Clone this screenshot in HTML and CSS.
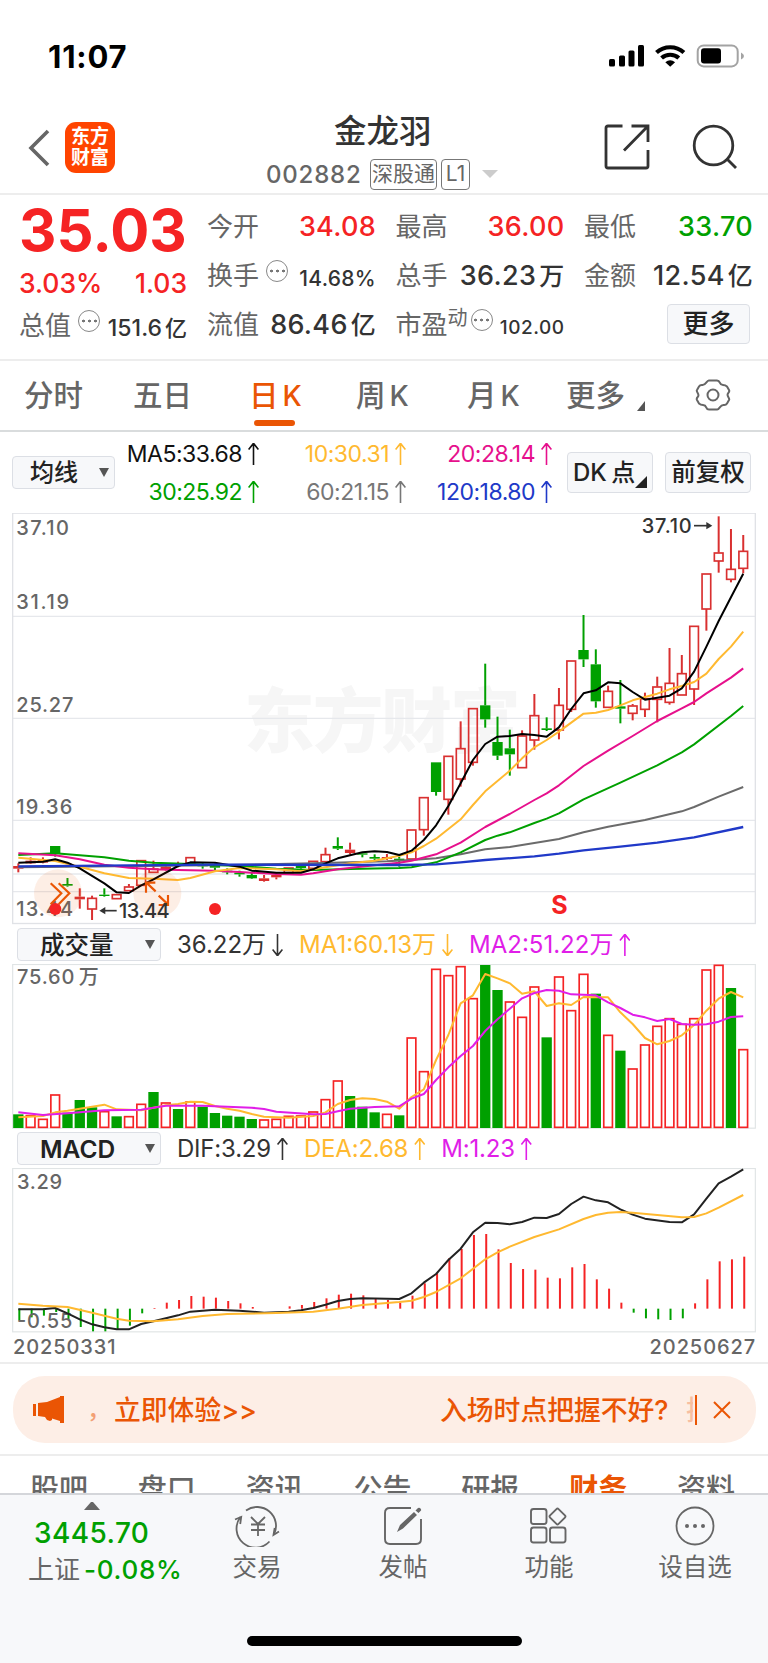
FILE: index.html
```
<!DOCTYPE html>
<html lang="zh-CN">
<head>
    <meta charset="UTF-8">
    <title>金龙羽 002882</title>
    <link rel="stylesheet" href="styles.css">
</head>
<body>
    <div class="status-bar">
        <span class="clock">11:07</span>
        <svg class="status-icons" width="140" height="24" viewBox="0 0 140 24">
            <rect x="1" y="15" width="6" height="7.500" rx="1.500"/>
            <rect x="11" y="11.500" width="6" height="11" rx="1.500"/>
            <rect x="20.500" y="6.500" width="6" height="16" rx="1.500"/>
            <rect x="30" y="1" width="6" height="21.500" rx="1.500"/>
            <g fill="none" stroke="#000" stroke-width="4.200">
                <path d="M48.500 8.500a20.500 20.500 0 0 1 27.400 0"/>
                <path d="M53.600 14a13 13 0 0 1 17.200 0"/>
            </g>
            <path d="M57.300 18.200q4.900-3.700 9.800 0l-4.900 4.600z"/>
            <rect x="89.700" y="1.400" width="40" height="21" rx="6" fill="none" stroke="#a3a3a3" stroke-width="2"/>
            <rect x="93" y="4.300" width="20" height="15.200" rx="3"/>
            <path d="M133 8.500q3 1.500 3 3.500t-3 3.500z" fill="#a3a3a3"/>
        </svg>
    </div>

    <header class="header">
        <svg class="back" width="24" height="40" viewBox="0 0 24 40"><path d="M21 3 4 20l17 17" fill="none" stroke="#666" stroke-width="3.600"/></svg>
        <div class="logo">东方<br>财富</div>
        <div class="title">
            <h1>金龙羽</h1>
            <div class="code-row">
                <span class="code">002882</span>
                <span class="tag">深股通</span>
                <span class="tag tag-l1">L1</span>
                <i class="caret"></i>
            </div>
        </div>
        <svg class="share" width="46" height="46" viewBox="0 0 46 46" fill="none" stroke="#333" stroke-width="2.800">
            <path d="M18.500 2H4Q2 2 2 4v38q0 2 2 2h38q2 0 2-2V26M27.500 2H44v16M44 2 20 26.500"/>
        </svg>
        <svg class="search" width="46" height="46" viewBox="0 0 46 46" fill="none" stroke="#333" stroke-width="2.800">
            <circle cx="21.500" cy="21.500" r="19.300"/><path d="m34.500 34.500 9.500 9.500"/>
        </svg>
    </header>

    <section class="quote">
        <div class="quote-main">
            <div class="price">35.03</div>
            <div class="pair change"><span>3.03%</span><span>1.03</span></div>
            <div class="pair cell"><label>总值</label><i class="more-dot"></i><b class="mid">151.6<em>亿</em></b></div>
        </div>
        <div class="quote-grid">
            <div class="cell"><label>今开</label><b class="up">34.08</b></div>
            <div class="cell"><label>最高</label><b class="up">36.00</b></div>
            <div class="cell"><label>最低</label><b class="down">33.70</b></div>
            <div class="cell"><label>换手</label><i class="more-dot"></i><b class="small">14.68%</b></div>
            <div class="cell"><label>总手</label><b>36.23<em>万</em></b></div>
            <div class="cell"><label>金额</label><b>12.54<em>亿</em></b></div>
            <div class="cell"><label>流值</label><b>86.46<em>亿</em></b></div>
            <div class="cell"><label>市盈<sup>动</sup></label><i class="more-dot tight"></i><b class="small tiny">102.00</b></div>
            <div class="cell"><button class="btn more-btn">更多</button></div>
        </div>
    </section>

    <nav class="period">
        <a class="p1">分时</a>
        <a class="p2">五日</a>
        <a class="p3 active">日<span>K</span></a>
        <a class="p4">周<span>K</span></a>
        <a class="p5">月<span>K</span></a>
        <a class="p6">更多<i class="corner"></i></a>
        <svg class="gear" width="36" height="34" viewBox="0 0 36 34" fill="none" stroke="#666" stroke-width="2">
            <path d="M14 2.500h8q2 0 2.800 2.200T28 7t4 1.500l2 3.500q.800 1.500-.700 3t0 4 .700 3l-2 3.500q-1 1.700-3.200 1.500t-4 2.300T22 31.500h-8q-2 0-2.800-2.200T8 27t-4-1.500L2 22q-.800-1.500.700-3t0-4T2 12l2-3.500Q5 6.800 7.200 7t4-2.300T14 2.500z" stroke-linejoin="round"/>
            <circle cx="18" cy="17" r="5.500"/>
        </svg>
    </nav>

    <section class="ma-bar">
        <button class="btn ma-btn">均线<i class="drop"></i></button>
        <div class="ma-grid">
            <span class="ma5">MA5:33.68<i class="arrow"></i></span>
            <span class="ma10">10:30.31<i class="arrow"></i></span>
            <span class="ma20">20:28.14<i class="arrow"></i></span>
            <span class="ma30">30:25.92<i class="arrow"></i></span>
            <span class="ma60">60:21.15<i class="arrow"></i></span>
            <span class="ma120">120:18.80<i class="arrow"></i></span>
        </div>
        <button class="btn dk-btn">DK 点<i class="corner"></i></button>
        <button class="btn fq-btn">前复权</button>
    </section>

    <svg class="chart kline" id="kline" viewBox="0 39 2304 1236"></svg>

    <div class="indicator">
        <button class="btn ind-btn">成交量<i class="drop"></i></button>
        <span class="dark">36.22万<i class="arrow dn"></i></span>
        <span class="ma10">MA1:60.13万<i class="arrow dn"></i></span>
        <span class="purple">MA2:51.22万<i class="arrow"></i></span>
    </div>
    <svg class="chart sub" id="volume" viewBox="0 132 2304 495"></svg>

    <div class="indicator macd-ind">
        <button class="btn ind-btn">MACD<i class="drop"></i></button>
        <span class="dark">DIF:3.29<i class="arrow"></i></span>
        <span class="ma10">DEA:2.68<i class="arrow"></i></span>
        <span class="purple">M:1.23<i class="arrow"></i></span>
    </div>
    <svg class="chart sub" id="macd" viewBox="0 114 2304 495"></svg>
    <div class="dates"><span>20250331</span><span>20250627</span></div>

    <section class="promo">
        <div class="banner">
            <svg class="horn" width="34" height="30" viewBox="0 0 34 30" fill="#ea5504">
                <path d="M1 9h3v12H1zM6 8l9-1L28 2V1h4v27h-4v-2l-8-2.500V25l-2 1-3-1-2-3-7-1z"/>
            </svg>
            <span class="comma">，</span>
            <span class="try">立即体验&gt;&gt;</span>
            <span class="ask">入场时点把握不好?</span>
            <span class="cut">把</span>
            <i class="bar"></i>
            <svg class="close" width="18" height="18" viewBox="0 0 18 18"><path d="m1 1 16 16M17 1 1 17" stroke="#ea5504" stroke-width="2"/></svg>
        </div>
    </section>

    <nav class="sub-tabs">
        <a>股吧</a><a>盘口</a><a>资讯</a><a>公告</a><a>研报</a><a class="active">财务</a><a>资料</a>
    </nav>

    <footer class="bottom">
        <div class="index">
            <i class="tri-up"></i>
            <div class="index-value">3445.70</div>
            <div class="index-row">上证<span>-0.08%</span></div>
        </div>
        <div class="tool">
            <svg width="46" height="42" viewBox="0 0 46 42" fill="none" stroke="#666" stroke-width="1.800">
                <path d="M6.500 12A19 19 0 0 0 35.500 36.500M12 5.500A19 19 0 0 1 40 29.500"/>
                <path d="M1 14.500 7.200 12l-1 7M45 26.500l-5.500 3.500 1.200-7"/>
                <path d="m17 12 7 7 7-7M24 19v12M17 19.500h14M17 25h14"/>
            </svg>
            <span>交易</span>
        </div>
        <div class="tool">
            <svg width="42" height="42" viewBox="0 0 42 42" fill="none" stroke="#666" stroke-width="1.900">
                <path d="M29 3H8Q3 3 3 8v26q0 5 5 5h26q5 0 5-5V14"/>
                <path d="m15 27 3-7L32 7l3 3-14 13.500zM33.500 5.500l2.500-2.500q1.500-.700 2.500.500t.500 2L36.500 8z" fill="#666" stroke="none"/>
            </svg>
            <span>发帖</span>
        </div>
        <div class="tool">
            <svg width="42" height="42" viewBox="0 0 42 42" fill="none" stroke="#666" stroke-width="1.900">
                <rect x="3" y="4" width="15.500" height="15" rx="2.500"/>
                <rect x="3" y="22.500" width="15.500" height="15" rx="2.500"/>
                <rect x="22" y="22.500" width="15.500" height="15" rx="2.500"/>
                <rect x="23.500" y="5.500" width="12" height="12" rx="1.500" transform="rotate(45 29.500 11.500)"/>
            </svg>
            <span>功能</span>
        </div>
        <div class="tool">
            <svg width="42" height="42" viewBox="0 0 42 42" fill="none" stroke="#666" stroke-width="1.800">
                <circle cx="21" cy="21" r="18.500"/>
                <g fill="#666" stroke="none"><circle cx="13" cy="21" r="2"/><circle cx="21" cy="21" r="2"/><circle cx="29" cy="21" r="2"/></g>
            </svg>
            <span>设自选</span>
        </div>
        <i class="home-bar"></i>
    </footer>

    <script src="chart.js"></script>
</body>
</html>
```
FILE: styles.css
```
* {
    box-sizing: border-box;
}
body {
    margin: 0;
    width: 768px;
    height: 1663px;
    overflow: hidden;
    background-color: #fff;
    font-family: Inter, "Noto Sans CJK SC", sans-serif;
    color: #333;
}
i, em {
    font-style: normal;
}
svg {
    display: block;
    flex: none;
}

/* status bar + title */
.status-bar {
    height: 100px;
    padding: 44px 20px 0 48px;
    display: flex;
    justify-content: space-between;
}
.clock {
    font-size: 31px;
    line-height: 25px;
    font-weight: 700;
    letter-spacing: 0.8px;
    color: #000;
}
.header {
    height: 95px;
    border-bottom: 2px solid #ededed;
    display: flex;
    padding: 0 29px 0 27px;
}
.back {
    margin-top: 28px;
}
.logo {
    margin: 22px 0 0 14px;
    width: 50px;
    height: 51px;
    border-radius: 11px;
    background-color: #ff4400;
    color: #fff;
    font-size: 19px;
    line-height: 21px;
    font-weight: 700;
    text-align: center;
    padding-top: 4px;
}
.title {
    width: 235px;
    margin: 13px 0 0 151px;
}
.title h1 {
    margin: 0;
    font-size: 32.500px;
    line-height: 38px;
    font-weight: 500;
    padding-left: 68px;
}
.code-row {
    display: flex;
    align-items: center;
    height: 32px;
    margin-top: 7px;
}
.code {
    font-size: 24px;
    font-weight: 500;
    color: #666;
    width: 104px;
    letter-spacing: 0.8px;
}
.tag {
    width: 67px;
    height: 31px;
    border: 1.5px solid #777;
    border-radius: 4px;
    font-size: 21px;
    line-height: 28px;
    text-align: center;
    color: #666;
    margin-right: 4px;
}
.tag-l1 {
    width: 29px;
    margin-right: 12px;
}
.caret {
    border: 8px solid transparent;
    border-top-color: #ccc;
    border-bottom: 0;
}
.share {
    margin: 24px 0 0 103px;
}
.search {
    margin: 24px 0 0 42px;
}

/* quote */
.quote {
    height: 166px;
    border-bottom: 2px solid #ededed;
    display: flex;
    padding-left: 19px;
}
.quote-main {
    width: 168px;
}
.price {
    font-size: 58px;
    line-height: 60px;
    height: 64px;
    padding-top: 5px;
    font-weight: 700;
    color: #f52324;
    letter-spacing: 0.1px;
}
.pair {
    display: flex;
    justify-content: space-between;
}
.change {
    height: 41px;
    line-height: 48px;
    font-size: 26.500px;
    font-weight: 500;
    color: #f52324;
}
.quote-main .cell {
    height: 49px;
    margin-top: 1px;
}
.quote-grid {
    display: grid;
    grid-template-columns: repeat(3, 169px);
    grid-template-rows: repeat(3, 49px);
    column-gap: 19.5px;
    margin: -5px 0 0 20px;
    padding-top: 12px;
}
.cell {
    display: flex;
    align-items: center;
    line-height: 40px;
}
.cell label {
    font-size: 26px;
    color: #666;
    white-space: nowrap;
}
.cell b {
    margin-left: auto;
    font-size: 27px;
    font-weight: 550;
    white-space: nowrap;
    letter-spacing: 0.3px;
}
.cell b.up {
    color: #f52324;
}
.cell b.down {
    color: #00a000;
}
.cell b em {
    margin-left: 3px;
    font-weight: 500;
    font-size: 25px;
}
.cell b.mid {
    font-size: 23px;
    font-weight: 500;
    padding-top: 5px;
    letter-spacing: 0;
}
.cell b.mid em {
    font-size: 22px;
}
.cell b.small {
    font-size: 21px;
    font-weight: 500;
    padding-top: 7px;
}
.cell b.tiny {
    font-size: 19px;
    letter-spacing: 0.5px;
}
.cell sup {
    font-size: 20px;
    line-height: 0;
    vertical-align: 9px;
}
.more-dot {
    width: 22px;
    height: 22px;
    border: 1.5px solid #888;
    border-radius: 50%;
    margin: -10px 0 0 7px;
    background: radial-gradient(circle, #777 1.2px, transparent 1.7px) 50% 50% / 5px 20px no-repeat,
        radial-gradient(circle, #777 1.2px, transparent 1.7px) 10% 50% / 5px 20px no-repeat,
        radial-gradient(circle, #777 1.2px, transparent 1.7px) 90% 50% / 5px 20px no-repeat;
}
.more-dot.tight {
    margin-left: 3px;
}
.btn {
    font-family: inherit;
    background-color: #f7f8fa;
    border: 1.5px solid #dcdfe5;
    border-radius: 4px;
    color: #222;
    padding: 0;
    font-weight: 500;
    white-space: nowrap;
}
.more-btn {
    width: 83px;
    height: 40px;
    margin: -2px 0 0 83px;
    font-size: 26px;
    line-height: 34px;
}

/* period tabs */
.period {
    height: 71px;
    border-bottom: 2px solid #d9dcdd;
    display: flex;
    padding-left: 24px;
    font-size: 29.5px;
    line-height: 68px;
    font-weight: 500;
    color: #666;
}
.period a {
    position: relative;
    white-space: nowrap;
}
.period span {
    margin-left: 4px;
    font-size: 28px;
}
.p1 { width: 109px; }
.p2 { width: 116px; }
.p3 { width: 107px; }
.p4 { width: 111px; }
.p5 { width: 99px; }
.p6 { width: 129px; }
.period .active {
    color: #ea5504;
}
.period .active::after {
    content: "";
    position: absolute;
    left: 5px;
    top: 59px;
    width: 41px;
    height: 6px;
    border-radius: 3px;
    background-color: #ea5504;
}
.corner {
    position: absolute;
    border-left: 8px solid transparent;
    border-bottom: 10px solid #555;
}
.period .corner {
    left: 71px;
    top: 40px;
}
.gear {
    margin-top: 17px;
}

/* moving averages */
.ma-bar {
    height: 81px;
    display: flex;
    padding-left: 12px;
}
.ma-btn {
    width: 103px;
    height: 33px;
    margin-top: 24px;
    font-size: 24px;
    line-height: 30px;
    text-align: left;
    padding-left: 17px;
}
.drop {
    float: right;
    margin: 10px 5px 0 0;
    border: 5.5px solid transparent;
    border-top: 9px solid #555;
    border-bottom: 0;
}
.ma-grid {
    width: 439px;
    display: grid;
    grid-template-columns: 144px 147px 146px;
    grid-template-rows: 38px 38px;
    padding-top: 3px;
    font-size: 23px;
    line-height: 38px;
    letter-spacing: -0.5px;
    text-align: right;
    white-space: nowrap;
}
.arrow {
    display: inline-block;
    width: 11px;
    height: 22px;
    margin-left: 6px;
    vertical-align: -3px;
    background-color: currentColor;
    clip-path: polygon(4.7px 0, 6.3px 0, 11px 6px, 9.800px 7px, 6.300px 2.800px, 6.300px 22px, 4.700px 22px, 4.700px 2.800px, 1.200px 7px, 0 6px);
}
.arrow.dn {
    transform: rotate(180deg);
}
.ma5 { color: #111; }
.ma10 { color: #ffb930; }
.ma20 { color: #e6108c; }
.ma30 { color: #00a000; }
.ma60 { color: #777; }
.ma120 { color: #2039c8; }
.dark { color: #333; }
.purple { color: #e01ee8; }
.dk-btn {
    position: relative;
    width: 86px;
    height: 41px;
    margin: 20px 0 0 13px;
    font-size: 24px;
    line-height: 37px;
    text-align: left;
    padding-left: 5px;
    word-spacing: -2px;
}
.dk-btn .corner {
    right: 5px;
    bottom: 4px;
    border-left-width: 12px;
    border-bottom: 12px solid #222;
}
.fq-btn {
    width: 86px;
    height: 41px;
    margin: 20px 0 0 12px;
    font-size: 24.5px;
    line-height: 37px;
}

/* charts */
.chart {
    width: 768px;
}
.kline {
    height: 412px;
}
.sub {
    height: 165px;
}
.chart .label {
    fill: #666;
    font-size: 60px;
    font-weight: 500;
}
.indicator {
    height: 39px;
    display: flex;
    align-items: center;
    padding: 0 0 0 17px;
    font-size: 24px;
    white-space: nowrap;
}
.indicator span {
    margin-right: 16px;
    line-height: 36px;
    padding-top: 1px;
}
.ind-btn {
    width: 144px;
    height: 33px;
    font-size: 24.500px;
    line-height: 30px;
    text-align: left;
    padding-left: 22px;
    margin-right: 16px;
}
.macd-ind {
    letter-spacing: -0.2px;
}
.macd-ind .ind-btn {
    font-weight: 600;
}
.dates {
    height: 31px;
    border-bottom: 2px solid #ededed;
    display: flex;
    justify-content: space-between;
    padding: 0 12px 0 13px;
    font-size: 20px;
    line-height: 28px;
    font-weight: 500;
    color: #666;
    letter-spacing: 0.9px;
}

/* promo banner */
.promo {
    height: 92px;
    border-bottom: 2px solid #ededed;
    padding: 12px 12px 0 13px;
}
.banner {
    height: 67px;
    border-radius: 32px;
    background-color: #fdeee6;
    color: #ea5504;
    display: flex;
    align-items: center;
    padding: 0 25px 0 19px;
    font-size: 26.800px;
    line-height: 40px;
    font-weight: 500;
    white-space: nowrap;
}
.comma {
    width: 26px;
    margin: 0 0 0 21px;
    opacity: 0.5;
    font-size: 24px;
}
.try {
    margin-left: 1px;
    width: 326px;
}
.ask {
    width: 246px;
}
.cut {
    width: 7px;
    overflow: hidden;
    opacity: 0.3;
}
.bar {
    width: 2px;
    height: 30px;
    margin-left: 2px;
    background-color: #ea5504;
}
.close {
    margin-left: auto;
}
.sub-tabs {
    height: 37px;
    overflow: hidden;
    display: flex;
    justify-content: space-between;
    padding: 14px 33px 0 30px;
    font-size: 29px;
    line-height: 40px;
    font-weight: 500;
    color: #666;
}
.sub-tabs .active {
    color: #ea5504;
    font-weight: 700;
}

/* bottom bar */
.bottom {
    position: relative;
    height: 170px;
    border-top: 2px solid #d4d6da;
    background-color: #f7f8fa;
    display: flex;
}
.index {
    width: 184px;
    padding: 7px 0 0 28px;
    display: flex;
    flex-direction: column;
}
.tri-up {
    margin-left: 56px;
    width: 16px;
    border: 7.5px solid transparent;
    border-bottom: 8px solid #666;
    border-top: 0;
}
.index-value {
    padding-left: 6px;
    font-size: 28px;
    line-height: 38px;
    margin-top: 4px;
    font-weight: 500;
    letter-spacing: 0.4px;
    color: #00a000;
}
.index-row {
    font-size: 26px;
    line-height: 35px;
    color: #666;
    white-space: nowrap;
}
.index-row span {
    margin-left: 4px;
    font-weight: 500;
    letter-spacing: 0.7px;
    color: #00a000;
}
.tool {
    width: 146px;
    padding-top: 10px;
    display: flex;
    flex-direction: column;
    align-items: center;
    font-size: 24.500px;
    line-height: 36px;
    color: #666;
}
.tool span {
    margin-top: 2px;
}
.home-bar {
    position: absolute;
    left: 247px;
    bottom: 17px;
    width: 275px;
    height: 10px;
    border-radius: 5px;
    background-color: #000;
}
```
FILE: chart.js
```
const STEP = 36.86;
const X0 = 55;
const RED = '#d93030';
const GREEN = '#00a000';

// one x per trading day, 60 days
function xAt(i) {
    return X0 + i * STEP;
}

function rect(x, y, w, h, fill, stroke, sw) {
    return `<rect x="${x}" y="${y}" width="${w}" height="${h}" fill="${fill}" stroke="${stroke || 'none'}" stroke-width="${sw || 0}"/>`;
}

function seg(x1, y1, x2, y2, color, w) {
    return `<path d="M${x1} ${y1}L${x2} ${y2}" stroke="${color}" stroke-width="${w}"/>`;
}

// points: "day,y day,y ..."
function curve(points, color, w) {
    let list = points.split(' ').map(p => {
        let [i, y] = p.split(',').map(Number);
        return xAt(i).toFixed(1) + ',' + y;
    });
    return `<polyline points="${list.join(' ')}" fill="none" stroke="${color}" stroke-width="${w}" stroke-linejoin="round"/>`;
}

function label(x, y, text, extra) {
    return `<text class="label" x="${x}" y="${y}" ${extra || ''}>${text}</text>`;
}

// [up, high, top, bottom, low]
const candles = [
    [1,1090,1098,1106,1117],[1,1072,1082,1090,1092],[1,1072,1080,1088,1090],[0,1038,1038,1062,1070],[0,1134,1152,1157,1160],
    [1,1165,1190,1198,1226],[1,1187,1194,1227,1260],[0,1165,1184,1188,1190],[1,1183,1183,1196,1196],[1,1152,1160,1172,1172],
    [1,1081,1081,1156,1156],[1,1082,1106,1117,1117],[1,1090,1100,1107,1112],[1,1085,1092,1098,1102],[1,1072,1072,1090,1090],
    [0,1088,1094,1099,1106],[0,1090,1098,1103,1110],[0,1105,1112,1117,1123],[0,1112,1118,1123,1130],[0,1118,1125,1135,1137],
    [1,1125,1135,1143,1145],[1,1120,1125,1132,1138],[1,1103,1103,1118,1118],[0,1096,1098,1104,1106],[1,1083,1083,1105,1105],
    [1,1043,1063,1085,1085],[0,1012,1038,1046,1050],[1,1028,1049,1059,1063],[0,1056,1060,1064,1072],[0,1063,1071,1076,1080],
    [1,1062,1071,1077,1080],[0,1070,1076,1080,1100],[1,989,989,1077,1077],[1,892,892,989,1007],[0,787,787,876,887],
    [1,768,768,898,944],[1,664,745,837,860],[1,625,625,787,797],[0,491,616,658,683],[0,650,726,767,780],
    [0,689,745,763,827],[1,691,707,803,803],[1,582,646,720,749],[0,652,685,690,693],[1,564,615,690,718],
    [1,482,482,628,636],[0,345,450,478,501],[0,448,493,604,623],[1,557,573,622,622],[0,540,619,626,670],
    [1,612,617,640,661],[1,578,595,628,651],[1,530,560,598,667],[1,444,549,607,614],[1,465,520,585,585],
    [1,378,378,567,615],[1,221,221,327,392],[1,49,158,183,218],[1,87,207,238,247],[1,105,153,205,220]
];

function drawKline() {
    let s = '';
    s += `<text x="732" y="740" font-size="212" font-weight="900" fill="#f6f6f6" textLength="830">东方财富</text>`;
    [349, 655, 961, 1122, 1175].forEach(y => s += seg(37, y, 2267, y, '#e6e8ec', 4));
    s += rect(38, 39.5, 2228, 1231, 'none', '#e0e2e6', 4);
    s += label(49, 105, '37.10', 'textLength="158"') + label(49, 326, '31.19', 'textLength="158"');
    s += label(49, 635, '25.27', 'textLength="171"') + label(49, 941, '19.36', 'textLength="168"') + label(49, 1249, '13.44', 'textLength="170"');
    candles.forEach(([up, hi, top, bot, low], i) => {
        let x = xAt(i);
        let c = up ? RED : GREEN;
        if (hi < top) s += seg(x, hi, x, top, c, 6);
        if (low > bot) s += seg(x, bot, x, low, c, 6);
        if (up && bot - top > 10) s += rect(x - 13, top + 1, 26, bot - top - 1, 'none', c, 5);
        else s += rect(x - 15.5, top, 31, bot - top, c);
    });
    s += curve('0,1102 16,1096 24,1090 30,1084 32,1080 34,1075 36,1063 38,1048 40,1041 44,1017 46,997 48,980 51,960 54,934 55,921 57,890 59,861', '#6b6b6b', 6);
    s += curve('0,1065 3,1060 7,1072 9,1082 11,1088 14,1092 18,1098 21,1106 24,1110 27,1107 31,1104 32,1102 34,1087 36,1057 38,1020 39,1007 40,997 42,969 43,956 44,940 46,898 49,848 52,796 54,757 55,733 58,648 59,618', '#00a000', 6);
    s += curve('0,1060 3,1066 5,1078 7,1094 9,1103 11,1108 13,1110 16,1112 18,1116 21,1122 23,1124 24,1120 26,1108 29,1096 31,1088 32,1082 34,1063 36,1028 38,981 40,942 42,900 43,880 44,856 46,798 48,752 50,708 52,663 54,625 55,606 56,580 58,533 59,505', '#e6108c', 6);
    s += curve('0,1073 3,1083 5,1100 7,1120 9,1134 11,1136 13,1140 14,1134 16,1114 18,1104 21,1108 23,1114 25,1102 27,1090 29,1082 31,1067 32,1057 33,1038 34,1016 36,958 37,915 38,874 40,812 41,775 42,742 43,720 44,695 45,668 46,641 47,638 48,630 49,616 50,601 51,591 52,581 53,568 54,558 55,546 56,521 57,477 58,440 59,395', '#ffb930', 6);
    s += curve('0,1088 2,1085 3,1078 4,1088 5,1105 7,1150 8,1177 9,1179 10,1156 11,1138 13,1098 14,1087 16,1088 18,1100 19,1112 21,1118 23,1118 24,1108 25,1090 26,1075 28,1057 29,1054 30,1056 31,1065 32,1052 33,1020 34,976 35,918 36,850 37,780 38,732 39,710 40,708 41,702 42,705 43,710 44,682 45,627 46,580 47,571 48,547 49,550 50,576 51,599 52,593 53,587 54,565 55,515 56,440 57,363 58,292 59,221', '#000', 6);
    s += curve('0,1099 16,1094 31,1095 34,1093 36,1087 38,1080 42,1069 44,1061 46,1051 49,1040 52,1028 55,1012 59,981', '#2039c8', 7);

    // expand / fast-forward handles
    s += '<circle cx="174" cy="1180" r="72" fill="#ea5504" opacity=".1"/><circle cx="472" cy="1180" r="72" fill="#ea5504" opacity=".1"/>';
    s += '<path d="M152 1150l32 30-32 33M176 1150l32 30-32 33M467 1174l-28-26M438 1178v-30h28M476 1187l28 26M504 1185v30h-28" fill="none" stroke="#ea5504" stroke-width="6.500"/>';
    s += '<circle cx="166" cy="1227" r="18" fill="#f52324"/><circle cx="645" cy="1227" r="18" fill="#f52324"/>';
    s += '<text x="1678" y="1243" font-size="75" font-weight="700" fill="#f52324" text-anchor="middle">S</text>';

    s += label(357, 1254, '13.44', 'style="fill:#333" textLength="152"') + seg(306, 1232, 350, 1232, '#333', 5);
    s += '<path d="M298 1232l18-11v22z" fill="#333"/>';
    s += label(1925, 98, '37.10', 'style="fill:#333" textLength="150"') + seg(2082, 77, 2126, 77, '#333', 5);
    s += '<path d="M2137 77l-18-11v22z" fill="#333"/>';
    document.getElementById('kline').innerHTML = s;
}

const volumes = [583,586,597,524,578,540,562,574,589,589,552,516,548,567,545,560,579,587,590,597,599,597,588,587,575,538,482,528,560,577,
    582,586,353,454,147,166,139,235,135,210,245,291,200,352,170,271,162,221,345,392,446,374,318,295,312,295,149,135,204,388];
// days drawn as solid green bars
const volumeDown = [0,4,5,6,8,11,13,15,16,17,18,19,27,28,29,31,38,39,43,47,49,58];

function drawVolume() {
    let s = rect(38, 133.5, 2228, 491, 'none', '#e0e4e5', 3.5);
    s += label(51, 191, '75.60<tspan dx="10">万</tspan>', 'letter-spacing="2.5"');
    volumes.forEach((top, i) => {
        let x = xAt(i);
        if (volumeDown.includes(i)) s += rect(x - 15.5, top, 31, 624 - top, GREEN);
        else s += rect(x - 13, top + 1, 26, 621 - top, '#fff', '#f52324', 5);
    });
    s += curve('0,592 2,588 3,577 4,572 6,560 7,554 8,568 10,571 12,556 13,552 14,545 15,546 16,558 17,566 18,572 19,582 20,590 22,593 24,588 25,577 26,552 27,540 28,535 29,537 30,545 31,566 32,531 33,508 34,420 35,345 36,250 37,226 38,162 39,175 40,190 41,221 42,214 43,258 44,250 45,255 46,231 48,232 49,277 50,312 51,354 52,373 53,363 54,346 55,315 56,272 57,236 58,216 59,232', '#ffb930', 6);
    s += curve('0,577 2,585 4,580 7,571 10,569 12,557 15,557 19,563 20,567 21,575 24,583 25,582 26,574 27,566 29,561 31,559 32,536 33,522 34,480 35,442 36,408 37,378 38,333 39,298 40,266 41,235 42,219 43,210 44,212 45,223 47,226 48,247 49,264 50,284 51,292 52,303 53,297 54,312 55,314 56,313 57,305 58,291 59,289', '#e01ee8', 6);
    document.getElementById('volume').innerHTML = s;
}

const macd = [571,562,557,546,568,591,604,604,597,587,550,534,518,510,498,500,503,513,520,531,536,536,529,525,516,505,494,491,496,507,
    510,518,497,460,430,384,357,315,312,358,399,417,419,443,445,412,402,448,476,518,548,565,568,570,565,520,448,394,388,380];

function drawMacd() {
    let s = rect(38, 115.5, 2228, 490, 'none', '#e0e4e5', 3.5);
    s += label(51, 176, '3.29', 'letter-spacing="2"');
    macd.forEach((y, i) => {
        s += seg(xAt(i) + 3, 536, xAt(i) + 3, y, y > 536 ? GREEN : '#f52324', 6);
    });
    s += label(51, 593, '-0.55', 'textLength="166"');
    s += curve('0,538 2,538 3,534 4,550 5,568 6,583 7,592 8,598 9,598 10,582 11,574 13,556 14,545 16,539 18,542 20,548 22,545 23,541 24,534 25,524 26,513 27,507 28,505 31,507 32,490 33,458 34,432 35,390 36,356 37,307 38,278 39,279 40,283 41,276 42,263 43,264 44,252 45,222 46,200 47,211 48,217 49,238 50,254 51,266 53,276 54,277 55,253 56,206 57,160 58,140 59,118', '#222', 6);
    s += curve('0,521 2,527 4,531 6,548 8,566 9,572 11,574 13,568 15,558 17,552 21,549 24,545 26,536 28,525 31,516 32,512 33,501 34,486 36,445 38,388 39,367 40,350 42,321 44,298 46,267 47,255 48,248 49,246 50,248 54,262 55,261 56,250 57,233 59,195', '#ffb930', 6);
    document.getElementById('macd').innerHTML = s;
}

drawKline();
drawVolume();
drawMacd();
```
